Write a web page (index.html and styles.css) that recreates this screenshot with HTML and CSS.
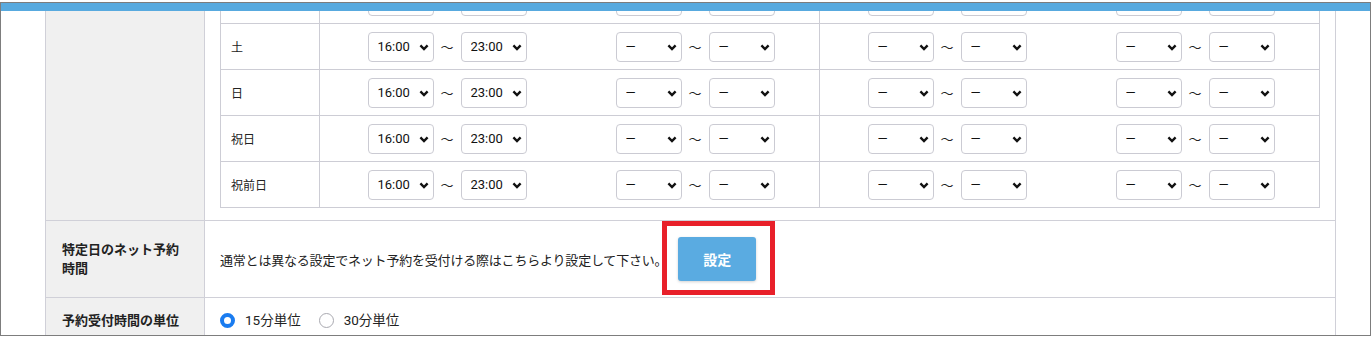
FILE: index.html
```html
<!DOCTYPE html>
<html lang="ja">
    <head>
        <meta charset="UTF-8" />
        <meta name="viewport" content="width=device-width, initial-scale=1.0" />
        <title>ネット予約設定</title>
        <link rel="stylesheet" href="styles.css">
    </head>
    <body>
        <div class="frame">
            <div class="topbar"></div>
            <div class="page">
                <div class="form">
                    <div class="form-row">
                        <div class="form-label"></div>
                        <div class="form-body">
                            <div class="schedule">
                                <div class="schedule-row">
                                    <div class="day">金</div>
                                    <div class="slots">
                                        <div class="range">
                                            <span class="sel"><select><option>16:00</option></select><svg viewBox="0 0 10 7"><path d="M1.4 1.4 5 5 8.6 1.4"/></svg></span>
                                            <span class="tilde">〜</span>
                                            <span class="sel"><select><option>23:00</option></select><svg viewBox="0 0 10 7"><path d="M1.4 1.4 5 5 8.6 1.4"/></svg></span>
                                        </div>
                                        <div class="range">
                                            <span class="sel"><select><option>—</option></select><svg viewBox="0 0 10 7"><path d="M1.4 1.4 5 5 8.6 1.4"/></svg></span>
                                            <span class="tilde">〜</span>
                                            <span class="sel"><select><option>—</option></select><svg viewBox="0 0 10 7"><path d="M1.4 1.4 5 5 8.6 1.4"/></svg></span>
                                        </div>
                                    </div>
                                    <div class="slots">
                                        <div class="range">
                                            <span class="sel"><select><option>—</option></select><svg viewBox="0 0 10 7"><path d="M1.4 1.4 5 5 8.6 1.4"/></svg></span>
                                            <span class="tilde">〜</span>
                                            <span class="sel"><select><option>—</option></select><svg viewBox="0 0 10 7"><path d="M1.4 1.4 5 5 8.6 1.4"/></svg></span>
                                        </div>
                                        <div class="range">
                                            <span class="sel"><select><option>—</option></select><svg viewBox="0 0 10 7"><path d="M1.4 1.4 5 5 8.6 1.4"/></svg></span>
                                            <span class="tilde">〜</span>
                                            <span class="sel"><select><option>—</option></select><svg viewBox="0 0 10 7"><path d="M1.4 1.4 5 5 8.6 1.4"/></svg></span>
                                        </div>
                                    </div>
                                </div>
                                <div class="schedule-row">
                                    <div class="day">土</div>
                                    <div class="slots">
                                        <div class="range">
                                            <span class="sel"><select><option>16:00</option></select><svg viewBox="0 0 10 7"><path d="M1.4 1.4 5 5 8.6 1.4"/></svg></span>
                                            <span class="tilde">〜</span>
                                            <span class="sel"><select><option>23:00</option></select><svg viewBox="0 0 10 7"><path d="M1.4 1.4 5 5 8.6 1.4"/></svg></span>
                                        </div>
                                        <div class="range">
                                            <span class="sel"><select><option>—</option></select><svg viewBox="0 0 10 7"><path d="M1.4 1.4 5 5 8.6 1.4"/></svg></span>
                                            <span class="tilde">〜</span>
                                            <span class="sel"><select><option>—</option></select><svg viewBox="0 0 10 7"><path d="M1.4 1.4 5 5 8.6 1.4"/></svg></span>
                                        </div>
                                    </div>
                                    <div class="slots">
                                        <div class="range">
                                            <span class="sel"><select><option>—</option></select><svg viewBox="0 0 10 7"><path d="M1.4 1.4 5 5 8.6 1.4"/></svg></span>
                                            <span class="tilde">〜</span>
                                            <span class="sel"><select><option>—</option></select><svg viewBox="0 0 10 7"><path d="M1.4 1.4 5 5 8.6 1.4"/></svg></span>
                                        </div>
                                        <div class="range">
                                            <span class="sel"><select><option>—</option></select><svg viewBox="0 0 10 7"><path d="M1.4 1.4 5 5 8.6 1.4"/></svg></span>
                                            <span class="tilde">〜</span>
                                            <span class="sel"><select><option>—</option></select><svg viewBox="0 0 10 7"><path d="M1.4 1.4 5 5 8.6 1.4"/></svg></span>
                                        </div>
                                    </div>
                                </div>
                                <div class="schedule-row">
                                    <div class="day">日</div>
                                    <div class="slots">
                                        <div class="range">
                                            <span class="sel"><select><option>16:00</option></select><svg viewBox="0 0 10 7"><path d="M1.4 1.4 5 5 8.6 1.4"/></svg></span>
                                            <span class="tilde">〜</span>
                                            <span class="sel"><select><option>23:00</option></select><svg viewBox="0 0 10 7"><path d="M1.4 1.4 5 5 8.6 1.4"/></svg></span>
                                        </div>
                                        <div class="range">
                                            <span class="sel"><select><option>—</option></select><svg viewBox="0 0 10 7"><path d="M1.4 1.4 5 5 8.6 1.4"/></svg></span>
                                            <span class="tilde">〜</span>
                                            <span class="sel"><select><option>—</option></select><svg viewBox="0 0 10 7"><path d="M1.4 1.4 5 5 8.6 1.4"/></svg></span>
                                        </div>
                                    </div>
                                    <div class="slots">
                                        <div class="range">
                                            <span class="sel"><select><option>—</option></select><svg viewBox="0 0 10 7"><path d="M1.4 1.4 5 5 8.6 1.4"/></svg></span>
                                            <span class="tilde">〜</span>
                                            <span class="sel"><select><option>—</option></select><svg viewBox="0 0 10 7"><path d="M1.4 1.4 5 5 8.6 1.4"/></svg></span>
                                        </div>
                                        <div class="range">
                                            <span class="sel"><select><option>—</option></select><svg viewBox="0 0 10 7"><path d="M1.4 1.4 5 5 8.6 1.4"/></svg></span>
                                            <span class="tilde">〜</span>
                                            <span class="sel"><select><option>—</option></select><svg viewBox="0 0 10 7"><path d="M1.4 1.4 5 5 8.6 1.4"/></svg></span>
                                        </div>
                                    </div>
                                </div>
                                <div class="schedule-row">
                                    <div class="day">祝日</div>
                                    <div class="slots">
                                        <div class="range">
                                            <span class="sel"><select><option>16:00</option></select><svg viewBox="0 0 10 7"><path d="M1.4 1.4 5 5 8.6 1.4"/></svg></span>
                                            <span class="tilde">〜</span>
                                            <span class="sel"><select><option>23:00</option></select><svg viewBox="0 0 10 7"><path d="M1.4 1.4 5 5 8.6 1.4"/></svg></span>
                                        </div>
                                        <div class="range">
                                            <span class="sel"><select><option>—</option></select><svg viewBox="0 0 10 7"><path d="M1.4 1.4 5 5 8.6 1.4"/></svg></span>
                                            <span class="tilde">〜</span>
                                            <span class="sel"><select><option>—</option></select><svg viewBox="0 0 10 7"><path d="M1.4 1.4 5 5 8.6 1.4"/></svg></span>
                                        </div>
                                    </div>
                                    <div class="slots">
                                        <div class="range">
                                            <span class="sel"><select><option>—</option></select><svg viewBox="0 0 10 7"><path d="M1.4 1.4 5 5 8.6 1.4"/></svg></span>
                                            <span class="tilde">〜</span>
                                            <span class="sel"><select><option>—</option></select><svg viewBox="0 0 10 7"><path d="M1.4 1.4 5 5 8.6 1.4"/></svg></span>
                                        </div>
                                        <div class="range">
                                            <span class="sel"><select><option>—</option></select><svg viewBox="0 0 10 7"><path d="M1.4 1.4 5 5 8.6 1.4"/></svg></span>
                                            <span class="tilde">〜</span>
                                            <span class="sel"><select><option>—</option></select><svg viewBox="0 0 10 7"><path d="M1.4 1.4 5 5 8.6 1.4"/></svg></span>
                                        </div>
                                    </div>
                                </div>
                                <div class="schedule-row">
                                    <div class="day">祝前日</div>
                                    <div class="slots">
                                        <div class="range">
                                            <span class="sel"><select><option>16:00</option></select><svg viewBox="0 0 10 7"><path d="M1.4 1.4 5 5 8.6 1.4"/></svg></span>
                                            <span class="tilde">〜</span>
                                            <span class="sel"><select><option>23:00</option></select><svg viewBox="0 0 10 7"><path d="M1.4 1.4 5 5 8.6 1.4"/></svg></span>
                                        </div>
                                        <div class="range">
                                            <span class="sel"><select><option>—</option></select><svg viewBox="0 0 10 7"><path d="M1.4 1.4 5 5 8.6 1.4"/></svg></span>
                                            <span class="tilde">〜</span>
                                            <span class="sel"><select><option>—</option></select><svg viewBox="0 0 10 7"><path d="M1.4 1.4 5 5 8.6 1.4"/></svg></span>
                                        </div>
                                    </div>
                                    <div class="slots">
                                        <div class="range">
                                            <span class="sel"><select><option>—</option></select><svg viewBox="0 0 10 7"><path d="M1.4 1.4 5 5 8.6 1.4"/></svg></span>
                                            <span class="tilde">〜</span>
                                            <span class="sel"><select><option>—</option></select><svg viewBox="0 0 10 7"><path d="M1.4 1.4 5 5 8.6 1.4"/></svg></span>
                                        </div>
                                        <div class="range">
                                            <span class="sel"><select><option>—</option></select><svg viewBox="0 0 10 7"><path d="M1.4 1.4 5 5 8.6 1.4"/></svg></span>
                                            <span class="tilde">〜</span>
                                            <span class="sel"><select><option>—</option></select><svg viewBox="0 0 10 7"><path d="M1.4 1.4 5 5 8.6 1.4"/></svg></span>
                                        </div>
                                    </div>
                                </div>
                            </div>
                        </div>
                    </div>

                    <div class="form-row">
                        <div class="form-label">特定日のネット予約時間</div>
                        <div class="form-body special">
                            <p class="note">通常とは異なる設定でネット予約を受付ける際はこちらより設定して下さい。</p>
                            <span class="highlight">
                                <button class="btn" type="button">設定</button>
                            </span>
                        </div>
                    </div>

                    <div class="form-row">
                        <div class="form-label">予約受付時間の単位</div>
                        <div class="form-body units">
                            <label class="radio"><input type="radio" name="unit" checked> 15分単位</label>
                            <label class="radio"><input type="radio" name="unit"> 30分単位</label>
                        </div>
                    </div>
                </div>
            </div>
        </div>
    </body>
</html>
```

FILE: styles.css
```css
* {
    box-sizing: border-box;
    margin: 0;
    padding: 0;
}
body {
    background-color: #fff;
    color: #222;
    font-family: Roboto, "Noto Sans CJK JP", sans-serif;
    font-size: 13px;
}
.frame {
    position: relative;
    margin-top: 2px;
    width: 1371px;
    height: 334px;
    border: 1px solid #7d7d7d;
    overflow: hidden;
}
.topbar {
    position: absolute;
    top: 0;
    left: 0;
    right: 0;
    height: 8px;
    background-color: #58aadf;
    z-index: 2;
}
.page {
    margin-top: -39px;
    padding-left: 44px;
}

/* form table */
.form {
    width: 1291px;
    border: 1px solid #d0d0d8;
    border-bottom: none;
}
.form-row {
    display: flex;
    border-bottom: 1px solid #d0d0d8;
}
.form-label {
    width: 159px;
    flex-shrink: 0;
    display: flex;
    align-items: center;
    padding: 0 16px;
    border-right: 1px solid #d0d0d8;
    background-color: #f0f0f0;
    font-weight: 700;
    line-height: 19px;
}
.form-body {
    flex: 1;
    padding: 12px 15px;
}

/* weekly schedule */
.schedule {
    width: 1100px;
    border: 1px solid #cdcdd5;
}
.schedule-row {
    display: flex;
    height: 46px;
    border-top: 1px solid #cdcdd5;
}
.schedule-row:first-child {
    height: 45px;
    border-top: none;
}
.day {
    width: 99px;
    display: flex;
    align-items: center;
    padding-left: 10px;
    border-right: 1px solid #cdcdd5;
    font-size: 12px;
}
.slots {
    width: 500px;
    display: grid;
    grid-template-columns: 1fr 1fr;
    align-items: center;
    justify-items: center;
    padding-left: 3px;
    border-right: 1px solid #cdcdd5;
}
.slots:last-child {
    width: 499px;
    border-right: none;
}
.range {
    display: flex;
    align-items: center;
}
.tilde {
    width: 13px;
    margin: 0 7px;
    font-family: "Noto Sans CJK JP", sans-serif;
    font-size: 13px;
    line-height: 1;
}
.sel {
    position: relative;
    display: block;
}
.sel select {
    appearance: none;
    display: block;
    width: 66px;
    height: 30px;
    padding-left: 9px;
    border: 1px solid #cbcbd3;
    border-radius: 4px;
    background-color: #fff;
    color: #111;
    font-family: Roboto, "Noto Sans CJK JP", sans-serif;
    font-size: 13px;
}
.sel svg {
    position: absolute;
    right: 5px;
    top: 12px;
    width: 10px;
    height: 7px;
    fill: none;
    stroke: #111;
    stroke-width: 2.4;
    pointer-events: none;
}

/* special days */
.special {
    display: flex;
    align-items: center;
    padding-top: 16px;
    padding-bottom: 16px;
}
.note {
    flex-shrink: 0;
    white-space: nowrap;
    letter-spacing: -0.2px;
}
.highlight {
    position: relative;
    margin-left: 11px;
}
.highlight::after {
    content: "";
    position: absolute;
    top: -16px;
    left: -16px;
    right: -19px;
    bottom: -14px;
    border: 5px solid #e8202a;
    pointer-events: none;
}
.btn {
    display: block;
    width: 78px;
    height: 44px;
    border: none;
    border-radius: 3px;
    background-color: #5aabe1;
    box-shadow: 0 1px 3px rgba(0, 0, 0, 0.18);
    color: #fff;
    font-family: "Noto Sans CJK JP", sans-serif;
    font-size: 14px;
    font-weight: 700;
    cursor: pointer;
}

/* units */
.units {
    display: flex;
    align-items: center;
    gap: 18px;
    line-height: 20px;
}
.radio {
    display: flex;
    align-items: center;
    gap: 10px;
    font-size: 13.5px;
}
.radio input {
    appearance: none;
    width: 15px;
    height: 15px;
    border: 1px solid #a9a9b0;
    border-radius: 50%;
    background-color: #fff;
}
.radio input:checked {
    border: 4.5px solid #1a7cf0;
}
```
